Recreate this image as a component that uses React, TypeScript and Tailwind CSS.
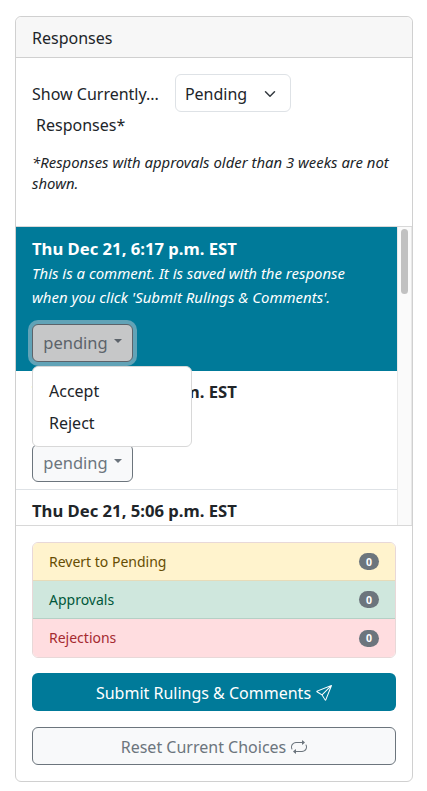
import { BsRepeat, BsSend } from 'react-icons/bs'

function StatusButton({ focused }: { focused?: boolean }) {
  return (
    <button
      className={
        focused
          ? 'flex h-[38px] w-[101px] items-center justify-center rounded-[6px] border border-[#5c636a] bg-[#c6c7c8] pb-[1px] text-[#5c636a] shadow-[0_0_0_4px_#62a3b7]'
          : 'flex h-[38px] w-[101px] items-center justify-center rounded-[6px] border border-[#6c757d] bg-[#f8f9fa] pb-[1px] text-[#6c757d]'
      }
    >
      <span className="text-[16.5px]">pending</span>
      <span className="ml-[6px] mb-[3px] h-0 w-0 border-x-[4px] border-t-[4px] border-x-transparent border-t-current" />
    </button>
  )
}

function CountRow({ label, className }: { label: string; className: string }) {
  return (
    <div className={`flex h-[38px] items-center justify-between px-[16px] text-[14px] ${className}`}>
      <span>{label}</span>
      <span className="flex h-[17px] w-[20px] items-center justify-center rounded-full bg-[#6c757d] text-[10.5px] font-bold text-white">
        0
      </span>
    </div>
  )
}

export default function App() {
  return (
    <div className="h-[791px] w-[427px] overflow-hidden bg-white pl-[15px] pt-[16px] font-['Noto_Sans',sans-serif] text-[16px] leading-[24px] text-[#212529]">
      <div className="w-[398px] rounded-[6px] border border-[#d0d0d0]">
        <div className="flex h-[41px] items-center rounded-t-[6px] border-b border-[#d0d0d0] bg-[#f7f7f7] px-[16px] pt-[1px]">
          Responses
        </div>

        <div className="h-[168px] px-[16px] pt-[16px]">
          <div className="flex items-center">
            <span className="pt-[1px]">Show Currently...</span>
            <div className="ml-[16px] flex h-[38px] w-[116px] items-center justify-between rounded-[6px] border border-[#dee2e6] pl-[9px] pr-[12px] pt-[1px]">
              <span>Pending</span>
              <svg width="16" height="12" viewBox="0 0 16 16" fill="none" stroke="#343a40" strokeWidth="2" strokeLinecap="round" strokeLinejoin="round">
                <path d="m2 5 6 6 6-6" />
              </svg>
            </div>
          </div>
          <div className="ml-[4px] mt-[1px]">Responses*</div>
          <p className="mt-[15px] text-[14.9px] leading-[21px] italic">
            *Responses with approvals older than 3 weeks are not shown.
          </p>
        </div>

        <div className="flex h-[300px] border-y border-[#d8d8d8]">
          <div className="relative w-[381px] overflow-hidden">
            <div className="h-[144px] bg-[#007a99] px-[16px] pt-[10px] text-white">
              <div className="text-[16.65px] font-bold">Thu Dec 21, 6:17 p.m. EST</div>
              <p className="text-[14.95px] italic">
                This is a comment. It is saved with the response when you click 'Submit Rulings &amp; Comments'.
              </p>
              <div className="mt-[15px]">
                <StatusButton focused />
              </div>
            </div>
            <div className="h-[119px] border-b border-[#dee2e6] px-[16px] pt-[9px]">
              <div className="text-[16.65px] font-bold">Thu Dec 21, 5:46 p.m. EST</div>
              <div className="mt-[40px]">
                <StatusButton />
              </div>
            </div>
            <div className="px-[16px] pt-[9px]">
              <div className="text-[16.65px] font-bold">Thu Dec 21, 5:06 p.m. EST</div>
            </div>

            <div className="absolute left-[16px] top-[139px] h-[81px] w-[160px] rounded-[6px] border border-[#d8d8d8] bg-white pt-[12px]">
              <div className="px-[16px]">Accept</div>
              <div className="mt-[8px] px-[16px]">Reject</div>
            </div>
          </div>

          <div className="flex w-[15px] justify-center border-x border-[#e8e8e8] bg-[#fafafa] pt-[2px]">
            <div className="h-[65px] w-[7px] rounded-full bg-[#c1c1c1]" />
          </div>
        </div>

        <div className="px-[16px] pt-[16px]">
          <div className="overflow-hidden rounded-[6px] border border-[#e8d8d8]">
            <CountRow label="Revert to Pending" className="border-b border-[#e6dbb9] bg-[#fff3cd] text-[#664d03]" />
            <CountRow label="Approvals" className="border-b border-[#b5d0c5] bg-[#cfe7dd] text-[#00573a]" />
            <CountRow label="Rejections" className="bg-[#ffdde0] text-[#a52a30]" />
          </div>

          <button className="mt-[15px] flex h-[38px] w-full items-center justify-center gap-[5px] rounded-[6px] bg-[#007a99] pt-[1px] text-white">
            Submit Rulings &amp; Comments
            <BsSend size={16} />
          </button>
          <button className="mb-[16px] mt-[16px] flex h-[38px] w-full items-center justify-center gap-[5px] rounded-[6px] border border-[#6c757d] bg-[#f8f9fa] pt-[1px] text-[#6c757d]">
            Reset Current Choices
            <BsRepeat size={16} />
          </button>
        </div>
      </div>
    </div>
  )
}
